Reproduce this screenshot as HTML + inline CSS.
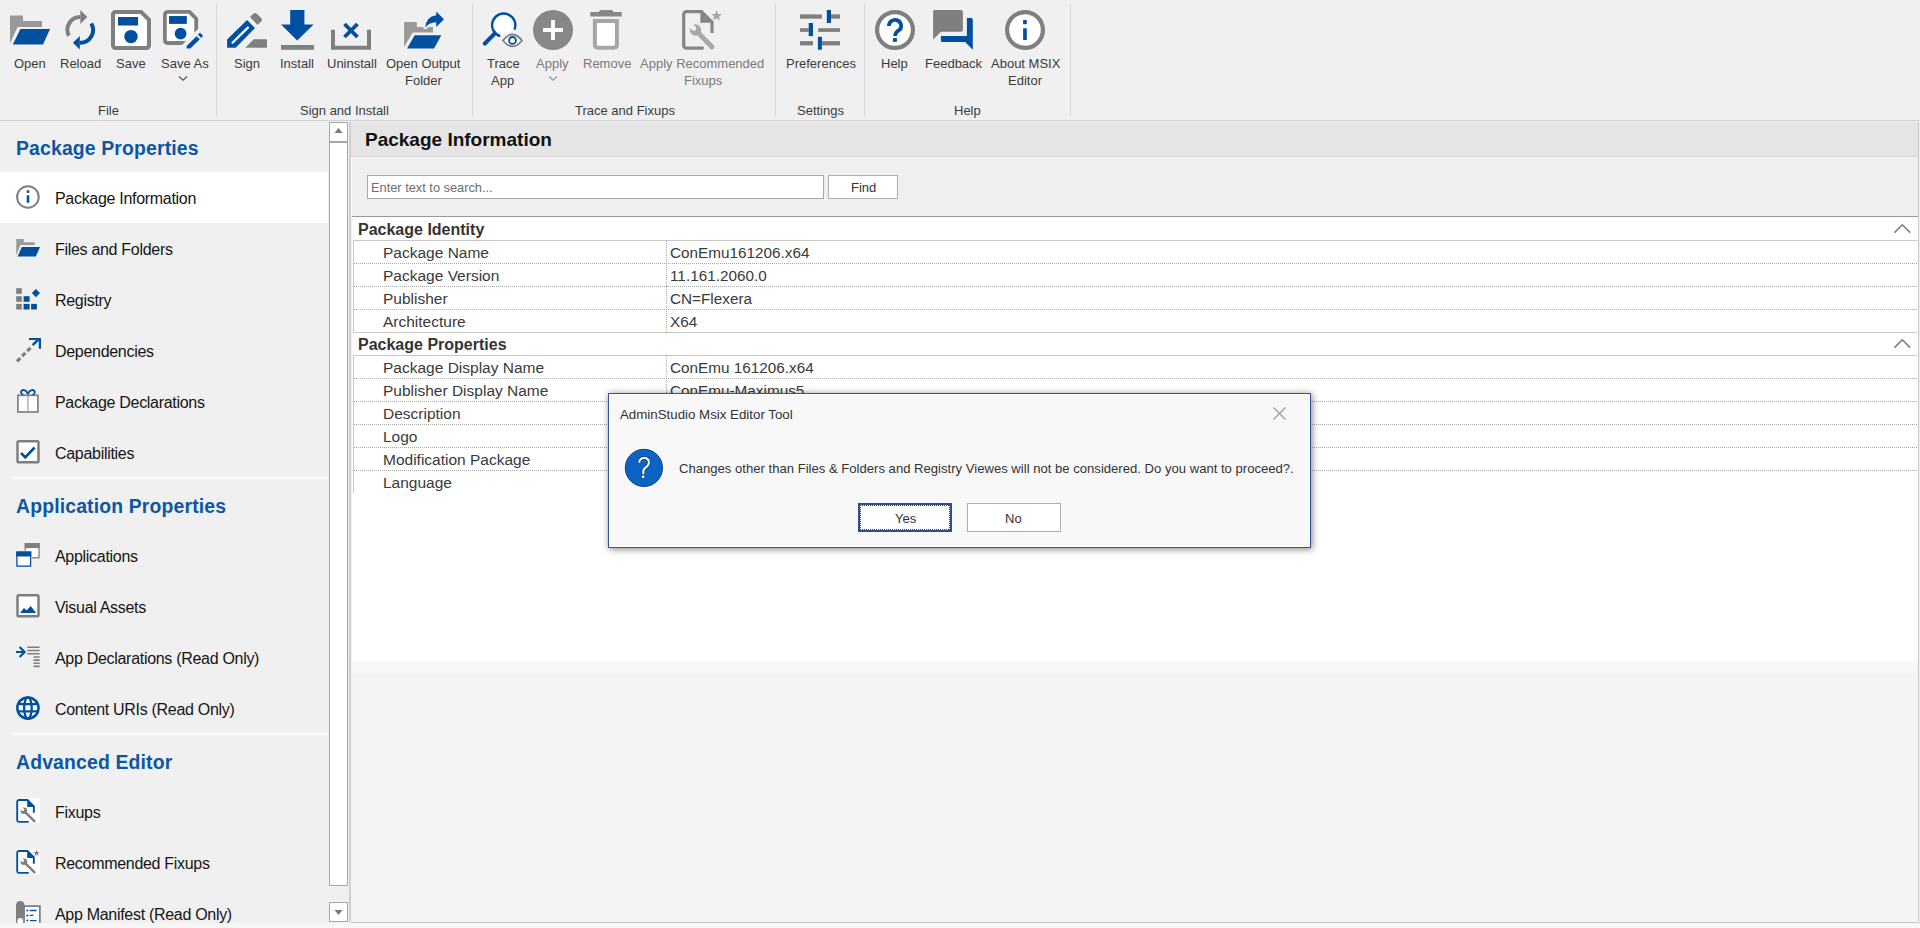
<!DOCTYPE html>
<html><head><meta charset="utf-8">
<style>
*{margin:0;padding:0;box-sizing:border-box}
html,body{width:1920px;height:928px;overflow:hidden;background:#f0f0f0;font-family:"Liberation Sans",sans-serif;position:relative}
.a{position:absolute}
.t{position:absolute;white-space:nowrap;line-height:1}
svg{position:absolute;overflow:visible}
.rl{font-size:13px;color:#3b3b3b;text-align:center}
.dis{color:#7a7a7a}
.gl{font-size:13px;color:#3b3b3b}
.sep{position:absolute;top:4px;width:1px;height:112px;background:#d6d6d6}
.si{font-size:16px;letter-spacing:-0.3px;color:#151515}
.sh{font-size:19.4px;font-weight:bold;letter-spacing:0.15px;color:#0b57a3}
.pl{font-size:15.5px;color:#3a3a3a}
.pv{font-size:15.3px;color:#3a3a3a}
.cat{font-size:16px;font-weight:bold;color:#333}
.dot{position:absolute;height:1px;background-image:linear-gradient(to right,#a8a8a8 50%,transparent 50%);background-size:2px 1px}
.vdot{position:absolute;width:1px;background-image:linear-gradient(to bottom,#a8a8a8 50%,transparent 50%);background-size:1px 2px}
</style></head><body>

<!-- RIBBON -->
<div class="a" style="left:0;top:0;width:1920px;height:120px;background:#f0f0f0"></div>
<div class="a" style="left:0;top:120px;width:1920px;height:1px;background:#d2d2d2"></div>
<div class="sep" style="left:216px"></div>
<div class="sep" style="left:472px"></div>
<div class="sep" style="left:775px"></div>
<div class="sep" style="left:864px"></div>
<div class="sep" style="left:1070px"></div>

<!-- ribbon labels -->
<div class="t rl" style="left:14px;top:57px">Open</div>
<div class="t rl" style="left:60px;top:57px">Reload</div>
<div class="t rl" style="left:116px;top:57px">Save</div>
<div class="t rl" style="left:161px;top:57px">Save As</div>
<div class="t gl" style="left:98px;top:104px">File</div>

<div class="t rl" style="left:234px;top:57px">Sign</div>
<div class="t rl" style="left:280px;top:57px">Install</div>
<div class="t rl" style="left:327px;top:57px">Uninstall</div>
<div class="t rl" style="left:386px;top:57px">Open Output</div>
<div class="t rl" style="left:405px;top:74px">Folder</div>
<div class="t gl" style="left:300px;top:104px">Sign and Install</div>

<div class="t rl" style="left:487px;top:57px">Trace</div>
<div class="t rl" style="left:491px;top:74px">App</div>
<div class="t rl dis" style="left:536px;top:57px">Apply</div>
<div class="t rl dis" style="left:583px;top:57px">Remove</div>
<div class="t rl dis" style="left:640px;top:57px">Apply Recommended</div>
<div class="t rl dis" style="left:684px;top:74px">Fixups</div>
<div class="t gl" style="left:575px;top:104px">Trace and Fixups</div>

<div class="t rl" style="left:786px;top:57px">Preferences</div>
<div class="t gl" style="left:797px;top:104px">Settings</div>
<div class="t rl" style="left:881px;top:57px">Help</div>
<div class="t rl" style="left:925px;top:57px">Feedback</div>
<div class="t rl" style="left:991px;top:57px">About MSIX</div>
<div class="t rl" style="left:1008px;top:74px">Editor</div>
<div class="t gl" style="left:954px;top:104px">Help</div>


<!-- RIBBON ICONS -->
<svg style="left:10px;top:10px" width="40" height="40" viewBox="0 0 40 40">
<path d="M0 5.5H13V11H32V17H7.6L0 33.5Z" fill="#999"/>
<path d="M10.4 19H40L33 34.5H2.8Z" fill="#0050a0"/>
</svg>
<svg style="left:60px;top:10px" width="40" height="40" viewBox="0 0 40 40">
<path d="M8.9 25.8A12.75 12.75 0 0 1 20.5 7.1" fill="none" stroke="#7f7f7f" stroke-width="4"/>
<path d="M20.3 0.1L27.3 7.1L20.3 14.1Z" fill="#7f7f7f"/>
<path d="M31.3 13.5A12.75 12.75 0 0 1 19.9 32.7" fill="none" stroke="#0050a0" stroke-width="4"/>
<path d="M19.8 26L13 32.7L19.8 39.5Z" fill="#0050a0"/>
</svg>
<svg style="left:111px;top:10px" width="40" height="40" viewBox="0 0 40 40">
<path d="M2 5Q2 2 5 2H30.2L38 9.8V35Q38 38 35 38H5Q2 38 2 35Z" fill="#fff" stroke="#7f7f7f" stroke-width="4"/>
<rect x="7" y="7" width="20" height="8.5" fill="#0050a0"/>
<circle cx="20" cy="26.6" r="6.7" fill="#0050a0"/>
</svg>
<svg style="left:163px;top:10px" width="40" height="40" viewBox="0 0 40 40">
<path d="M33.2 30V8.7L26.5 1.9H5Q1.9 1.9 1.9 5V30Q1.9 33 5 33H30Z" fill="#fff" stroke="#7f7f7f" stroke-width="3.8"/>
<rect x="6.05" y="6.05" width="17.75" height="7.85" fill="#0050a0"/>
<circle cx="17.6" cy="23.6" r="5.9" fill="#0050a0"/>
<path d="M54 0L14 40H40V0Z" fill="#f0f0f0"/>
<path d="M23.6 36L23.8 38.6H27.3L36.8 29.2L33.5 26.25Z" fill="#0050a0"/>
<path d="M34.9 24.4L37 22.7L40 25.7L38.1 27.9Z" fill="#0050a0"/>
</svg>

<svg style="left:227px;top:10px" width="40" height="40" viewBox="0 0 40 40">
<path d="M0.1 37.8V29.5L20.05 10.1L28 17.9L8.7 37.8Z" fill="#0050a0"/>
<line x1="5.5" y1="32.7" x2="20.9" y2="17.6" stroke="#fff" stroke-width="2.2" stroke-linecap="round"/>
<path d="M23 7.1L26.6 3.6Q28.1 2.3 29.6 3.6L34.4 8.3Q35.7 9.8 34.4 11.3L30.6 14.9Z" fill="#7f7f7f"/>
<path d="M18.2 37.8L26.8 29.2H40V37.8Z" fill="#7f7f7f"/>
</svg>
<svg style="left:277px;top:10px" width="40" height="40" viewBox="0 0 40 40">
<path d="M13.2 0H27.4V14.4H36.6L20.2 30.4L4 14.4H13.2Z" fill="#0050a0"/>
<rect x="4" y="35" width="32.9" height="4.8" fill="#7f7f7f"/>
</svg>
<svg style="left:331px;top:10px" width="40" height="40" viewBox="0 0 40 40">
<path d="M2 19.8V37.8H38V19.8" fill="none" stroke="#7f7f7f" stroke-width="4"/>
<path d="M13.5 14L26.5 27M26.5 14L13.5 27" stroke="#0050a0" stroke-width="3.8"/>
</svg>
<svg style="left:404px;top:10px" width="40" height="40" viewBox="0 0 40 40">
<path d="M0.1 12H12.8V17.1H18.7Q21.3 21.5 24.2 17.1H29V22.5H8.7L0.1 37Z" fill="#999"/>
<path d="M10.6 25.2H37.3L30 38.4H3.1Z" fill="#0050a0"/>
<path d="M21.2 17.8Q22 6.5 32.2 5.2V1.5L40 9.3L32.2 17.1V12.2Q24.5 12.3 21.2 17.8Z" fill="#0050a0"/>
</svg>

<svg style="left:483px;top:10px" width="40" height="40" viewBox="0 0 40 40">
<path d="M17.3 26.2A11.6 11.6 0 1 1 31.4 19.6" fill="#fff" stroke="#0050a0" stroke-width="2.4"/>
<line x1="1.8" y1="33.6" x2="11.6" y2="23.6" stroke="#0050a0" stroke-width="4.2" stroke-linecap="round"/>
<path d="M19.9 30.5Q29.5 18.5 39 30.5Q29.5 42.3 19.9 30.5Z" fill="#fff" stroke="#f0f0f0" stroke-width="5"/>
<path d="M19.9 30.5Q29.5 18.5 39 30.5Q29.5 42.3 19.9 30.5Z" fill="#fff" stroke="#7f7f7f" stroke-width="1.8"/>
<circle cx="29.5" cy="30.4" r="3.4" fill="#fff" stroke="#0050a0" stroke-width="1.8"/>
</svg>
<svg style="left:533px;top:10px" width="40" height="40" viewBox="0 0 40 40">
<circle cx="20" cy="20" r="20" fill="#878787"/>
<path d="M20 10V30M10 20H30" stroke="#fff" stroke-width="3.8"/>
</svg>
<svg style="left:590px;top:10px" width="40" height="40" viewBox="0 0 40 40">
<path d="M0.24 2H8.6L10.5 0.1H21.8L23.9 2H31.76V6.6H0.24Z" fill="#888"/>
<path d="M4.9 11V34.5Q4.9 37.7 8.1 37.7H23.7Q26.9 37.7 26.9 34.5V11Z" fill="#fff" stroke="#a6a6a6" stroke-width="4"/>
</svg>
<svg style="left:682px;top:10px" width="40" height="40" viewBox="0 0 40 40">
<path d="M21.7 38.2H4.7Q1.7 38.2 1.7 35.2V4.7Q1.7 1.7 4.7 1.7H19.5L30 12.2V23" fill="#f0f0f0" stroke="#868686" stroke-width="3.2"/>
<path d="M18.4 0.1V12.8H31.6Z" fill="#868686"/>
<circle cx="13.45" cy="20" r="5.7" fill="#a8a8a8"/>
<line x1="13.5" y1="20" x2="30" y2="37" stroke="#a8a8a8" stroke-width="4.8" stroke-linecap="round"/>
<circle cx="11.8" cy="18.4" r="2.4" fill="#f0f0f0"/>
<path d="M13.5 16.7L10.1 20.1L4.4 14.4L7.8 11Z" fill="#f0f0f0"/>
<path d="M34.6 0.3L36.1 3.9L39.9 4.1L37 6.6L38 10.3L34.6 8.2L31.2 10.3L32.2 6.6L29.3 4.1L33.1 3.9Z" fill="#a8a8a8"/>
</svg>

<svg style="left:800px;top:10px" width="40" height="40" viewBox="0 0 40 40" fill="#7f7f7f">
<rect x="0" y="4.4" width="21.9" height="4.3"/><rect x="31" y="4.4" width="9" height="4.3"/>
<rect x="0" y="18.2" width="8.7" height="3.7"/><rect x="18.2" y="18.2" width="21.8" height="3.7"/>
<rect x="0" y="31.1" width="13" height="4.3"/><rect x="21.9" y="31.1" width="18.1" height="4.3"/>
<rect x="26.8" y="0" width="4.2" height="13" fill="#0050a0"/>
<rect x="8.7" y="13" width="4.3" height="13.1" fill="#0050a0"/>
<rect x="17.9" y="26.8" width="4" height="12.9" fill="#0050a0"/>
</svg>
<svg style="left:875px;top:10px" width="40" height="40" viewBox="0 0 40 40">
<circle cx="20" cy="20" r="17.9" fill="#fff" stroke="#7f7f7f" stroke-width="4.2"/>
<path d="M13.95 16A6.1 6.1 0 1 1 25.1 19.4Q20.1 22.4 20.1 26" fill="none" stroke="#0050a0" stroke-width="3.8"/>
<rect x="17.9" y="28.1" width="4" height="3.8" fill="#0050a0"/>
</svg>
<svg style="left:933px;top:10px" width="40" height="40" viewBox="0 0 40 40">
<path d="M1.6 0.1H28.3Q29.9 0.1 29.9 1.7V20.1Q29.9 21.7 28.3 21.7H7.9L0.1 29.5V1.7Q0.1 0.1 1.6 0.1Z" fill="#7f7f7f"/>
<path d="M33.9 7.9H38.2Q39.8 7.9 39.8 9.5V39.7L32.1 32.1H9.5Q7.9 32.1 7.9 30.5V26.1H33.9Z" fill="#0050a0"/>
</svg>
<svg style="left:1005px;top:10px" width="40" height="40" viewBox="0 0 40 40">
<circle cx="20" cy="20" r="17.9" fill="#fff" stroke="#7f7f7f" stroke-width="4.2"/>
<rect x="18.1" y="10" width="3.7" height="4.2" fill="#0050a0"/>
<rect x="18.1" y="18.3" width="3.7" height="11.7" fill="#0050a0"/>
</svg>
<!-- dropdown chevrons -->
<svg style="left:178px;top:75px" width="10" height="7" viewBox="0 0 10 7"><path d="M1 1.5L5 5.2L9 1.5" fill="none" stroke="#555" stroke-width="1.3"/></svg>
<svg style="left:548px;top:75px" width="10" height="7" viewBox="0 0 10 7"><path d="M1 1.5L5 5.2L9 1.5" fill="none" stroke="#999" stroke-width="1.3"/></svg>

<!-- SIDEBAR -->
<div class="a" style="left:0;top:172px;width:328px;height:51px;background:#fff"></div>
<div class="t sh" style="left:16px;top:139px">Package Properties</div>
<div class="t si" style="left:55px;top:191px">Package Information</div>
<div class="t si" style="left:55px;top:242px">Files and Folders</div>
<div class="t si" style="left:55px;top:293px">Registry</div>
<div class="t si" style="left:55px;top:344px">Dependencies</div>
<div class="t si" style="left:55px;top:395px">Package Declarations</div>
<div class="t si" style="left:55px;top:446px">Capabilities</div>
<div class="a" style="left:12px;top:477px;width:316px;height:2px;background:#fafafa"></div>
<div class="t sh" style="left:16px;top:497px">Application Properties</div>
<div class="t si" style="left:55px;top:549px">Applications</div>
<div class="t si" style="left:55px;top:600px">Visual Assets</div>
<div class="t si" style="left:55px;top:651px">App Declarations (Read Only)</div>
<div class="t si" style="left:55px;top:702px">Content URIs (Read Only)</div>
<div class="a" style="left:12px;top:733px;width:316px;height:2px;background:#fafafa"></div>
<div class="t sh" style="left:16px;top:753px">Advanced Editor</div>
<div class="t si" style="left:55px;top:805px">Fixups</div>
<div class="t si" style="left:55px;top:856px">Recommended Fixups</div>
<div class="t si" style="left:55px;top:907px">App Manifest (Read Only)</div>


<!-- SIDEBAR ICONS -->
<svg style="left:10px;top:177px" width="40" height="40" viewBox="0 0 40 40">
<circle cx="17.9" cy="20" r="10.8" fill="none" stroke="#7f7f7f" stroke-width="2"/>
<rect x="16.7" y="13.3" width="2.6" height="2.6" fill="#0050a0"/>
<rect x="16.7" y="18.4" width="2.6" height="7.3" fill="#0050a0"/>
</svg>
<svg style="left:10px;top:230px" width="40" height="40" viewBox="0 0 40 40">
<path d="M6.25 9H13.8V12.3H24.8V15H10.4L6.25 25.4Z" fill="#999"/>
<path d="M11.8 17H30L25.8 26.5H7.6Z" fill="#0050a0"/>
</svg>
<svg style="left:10px;top:280px" width="40" height="40" viewBox="0 0 40 40">
<rect x="6.2" y="8.2" width="5.6" height="5.6" fill="#7f7f7f"/>
<rect x="6.2" y="16.2" width="5.6" height="5.6" fill="#7f7f7f"/>
<rect x="6.2" y="23.9" width="5.6" height="5.6" fill="#7f7f7f"/>
<rect x="13.6" y="16.2" width="6" height="5.6" fill="#0050a0"/>
<rect x="13.6" y="23.9" width="6" height="5.6" fill="#0050a0"/>
<rect x="21.1" y="23.9" width="5.8" height="5.6" fill="#0050a0"/>
<path d="M25.9 9L30 13.1L25.9 17.2L21.8 13.1Z" fill="#0050a0"/>
</svg>
<svg style="left:10px;top:331px" width="40" height="40" viewBox="0 0 40 40">
<path d="M7 30.3L21.8 15.6" stroke="#7f7f7f" stroke-width="3.2" stroke-dasharray="4.6 2.6"/>
<path d="M22.6 14.2L29 7.9" stroke="#0050a0" stroke-width="2.4"/>
<path d="M19 8H29.9V17.7" fill="none" stroke="#0050a0" stroke-width="2.2"/>
</svg>
<svg style="left:10px;top:382px" width="40" height="40" viewBox="0 0 40 40">
<rect x="7.9" y="13.3" width="20" height="16.7" fill="#fff" stroke="#7f7f7f" stroke-width="1.7"/>
<line x1="17.9" y1="14" x2="17.9" y2="29.3" stroke="#a8a8a8" stroke-width="1.3"/>
<path d="M17.9 12.2C16.5 7 11 7 11 10.3C11 12 12.5 12.6 13.2 12.8M17.9 12.2C19.3 7 24.8 7 24.8 10.3C24.8 12 23.3 12.6 22.6 12.8" fill="none" stroke="#0050a0" stroke-width="1.8"/>
</svg>
<svg style="left:10px;top:433px" width="40" height="40" viewBox="0 0 40 40">
<rect x="7.5" y="8.35" width="21" height="21" rx="1.3" fill="#fff" stroke="#7f7f7f" stroke-width="2.5"/>
<path d="M11 20L15.3 24.3L24.6 14.5" fill="none" stroke="#0050a0" stroke-width="2.6"/>
</svg>

<svg style="left:10px;top:536px" width="40" height="40" viewBox="0 0 40 40">
<rect x="15.35" y="7.75" width="13.7" height="14" fill="#fff" stroke="#7f7f7f" stroke-width="1.3"/>
<rect x="14.7" y="7.1" width="15" height="5" fill="#7f7f7f"/>
<rect x="5.5" y="14.7" width="16.6" height="16.9" fill="#f0f0f0"/>
<rect x="6.9" y="16.15" width="13.7" height="14" fill="#fff" stroke="#0050a0" stroke-width="1.3"/>
<rect x="6.25" y="15.5" width="15" height="5" fill="#0050a0"/>
</svg>
<svg style="left:10px;top:587px" width="40" height="40" viewBox="0 0 40 40">
<rect x="7.5" y="8.35" width="21" height="21" rx="1.3" fill="#fff" stroke="#7f7f7f" stroke-width="2.5"/>
<path d="M10.1 25.9L14 20.9L16.6 23.5L20.7 19L26.1 25.9Z" fill="#0050a0"/>
</svg>
<svg style="left:10px;top:638px" width="40" height="40" viewBox="0 0 40 40">
<path d="M6 14H15M9.6 9L14.6 14L9.6 19" fill="none" stroke="#0050a0" stroke-width="2.2"/>
<path d="M17.2 9.3H29.7M17.2 12.5H29.7M17.2 15.7H29.7M23.5 19H29.7M23.5 22.1H29.7M23.5 25.2H29.7M23.5 28.4H29.7" stroke="#7f7f7f" stroke-width="1.6"/>
</svg>
<svg style="left:10px;top:689px" width="40" height="40" viewBox="0 0 40 40">
<circle cx="17.9" cy="19" r="10.6" fill="#fff" stroke="#0050a0" stroke-width="2.5"/>
<path d="M8 15.1H27.8M8 22.4H27.8" stroke="#0050a0" stroke-width="2.4"/>
<ellipse cx="17.9" cy="19" rx="3.8" ry="10.6" fill="none" stroke="#0050a0" stroke-width="2.3"/>
</svg>

<svg style="left:10px;top:792px" width="40" height="40" viewBox="0 0 40 40">
<rect x="6.25" y="6.6" width="23.8" height="24.2" fill="#fff"/>
<path d="M18.75 29.85H8.7Q7.2 29.85 7.2 28.35V9.6Q7.2 8.05 8.7 8.05H17.5L23.85 14.4V20.7" fill="none" stroke="#0050a0" stroke-width="1.9"/>
<path d="M17.2 7.1V14.9H24.8Z" fill="#0050a0"/>
<circle cx="13.9" cy="18.8" r="3.3" fill="#7f7f7f"/>
<line x1="13.9" y1="18.8" x2="24.3" y2="29.1" stroke="#7f7f7f" stroke-width="2.6" stroke-linecap="round"/>
<circle cx="12.9" cy="17.8" r="1.3" fill="#fff"/>
<path d="M13.82 16.88L11.98 18.72L8.44 15.18L10.28 13.34Z" fill="#fff"/>
</svg>
<svg style="left:10px;top:843px" width="40" height="40" viewBox="0 0 40 40">
<rect x="6.25" y="6.6" width="23.8" height="24.2" fill="#fff"/>
<path d="M18.75 29.85H8.7Q7.2 29.85 7.2 28.35V9.6Q7.2 8.05 8.7 8.05H17.5L23.85 14.4V20.7" fill="none" stroke="#0050a0" stroke-width="1.9"/>
<path d="M17.2 7.1V14.9H24.8Z" fill="#0050a0"/>
<circle cx="13.9" cy="18.8" r="3.3" fill="#7f7f7f"/>
<line x1="13.9" y1="18.8" x2="24.3" y2="29.1" stroke="#7f7f7f" stroke-width="2.6" stroke-linecap="round"/>
<circle cx="12.9" cy="17.8" r="1.3" fill="#fff"/>
<path d="M13.82 16.88L11.98 18.72L8.44 15.18L10.28 13.34Z" fill="#fff"/>
<path d="M26.5 6.6L27.4 8.9L29.8 9L27.9 10.5L28.6 12.9L26.5 11.5L24.4 12.9L25.1 10.5L23.2 9L25.6 8.9Z" fill="#7f7f7f"/>
</svg>
<svg style="left:10px;top:894px" width="40" height="29" viewBox="0 0 40 29">
<rect x="6.05" y="6.97" width="8.6" height="21.8" fill="#fff"/>
<path d="M13.9 28.8V12.1H29.85V28.8" fill="#fff" stroke="#7f7f7f" stroke-width="1.8"/>
<path d="M6 28.8V11.3Q6 7 10.3 7Q14.6 7 14.6 11.3V28.8Z" fill="#7f7f7f"/>
<circle cx="10.3" cy="26.9" r="2.9" fill="#fff"/>
<circle cx="17.4" cy="16.5" r="1" fill="#0050a0"/><circle cx="17.4" cy="21.4" r="1" fill="#0050a0"/><circle cx="17.4" cy="26.6" r="1" fill="#0050a0"/>
<path d="M20.3 16.5H26M20.3 21.4H22.8M20.3 26.6H26" stroke="#0050a0" stroke-width="1.4" stroke-linecap="round"/>
</svg>

<!-- scrollbar -->
<div class="a" style="left:329px;top:122px;width:19px;height:800px;background:#f0f0f0"></div>
<div class="a" style="left:329px;top:122px;width:19px;height:764px;background:#fff;border:1px solid #a6a6a6"></div>
<div class="a" style="left:329px;top:141px;width:19px;height:2px;background:#a6a6a6"></div>
<div class="a" style="left:329px;top:902px;width:19px;height:20px;background:#fff;border:1px solid #a6a6a6"></div>
<svg style="left:329px;top:122px" width="19" height="20"><path d="M5.5 11 L9.5 6 L13.5 11Z" fill="#7a7a7a"/></svg>
<svg style="left:329px;top:902px" width="19" height="20"><path d="M5.5 8 L9.5 13 L13.5 8Z" fill="#7a7a7a"/></svg>
<div class="a" style="left:349px;top:122px;width:2px;height:800px;background:#d0d0d0"></div>

<!-- CONTENT -->
<div class="a" style="left:351px;top:122px;width:1568px;height:800px;background:#f4f4f4"></div>
<div class="a" style="left:351px;top:661px;width:1567px;height:12px;background:#f7f7f7"></div>
<div class="a" style="left:351px;top:122px;width:1568px;height:34px;background:#e5e5e5"></div>
<div class="a" style="left:351px;top:156px;width:1568px;height:1px;background:#d3d3d3"></div>
<div class="a" style="left:351px;top:157px;width:1568px;height:59px;background:#efefef;border-top:1px solid #f8f8f8;border-left:1px solid #f8f8f8"></div>
<div class="t" style="left:365px;top:130px;font-size:19px;font-weight:bold;color:#111">Package Information</div>
<div class="a" style="left:367px;top:175px;width:457px;height:24px;background:#fff;border:1px solid #a9a9a9"></div>
<div class="t" style="left:371px;top:182px;font-size:12.8px;color:#6d6d6d">Enter text to search...</div>
<div class="a" style="left:828px;top:175px;width:70px;height:24px;background:#fff;border:1px solid #b0b0b0"></div>
<div class="t" style="left:851px;top:181px;font-size:13px;color:#333">Find</div>

<div class="a" style="left:352px;top:216px;width:1566px;height:445px;background:#fff"></div>
<div class="a" style="left:352px;top:216px;width:1566px;height:1px;background:#999"></div>
<div class="a" style="left:1918px;top:122px;width:1px;height:800px;background:#c8c8c8"></div>
<div class="a" style="left:351px;top:922px;width:1568px;height:1px;background:#c8c8c8"></div>
<div class="a" style="left:0;top:923px;width:1920px;height:5px;background:#f7f7f7"></div>

<!-- grid -->
<div class="t cat" style="left:358px;top:222px">Package Identity</div>
<div class="a" style="left:353px;top:240px;width:1564px;height:1px;background:#c8c8c8"></div>
<div class="a" style="left:353px;top:240px;width:1px;height:93px;background:#c8c8c8"></div>
<div class="vdot" style="left:666px;top:241px;height:92px"></div>
<div class="t pl" style="left:383px;top:245px">Package Name</div>
<div class="t pv" style="left:670px;top:245px">ConEmu161206.x64</div>
<div class="dot" style="left:354px;top:263px;width:1563px"></div>
<div class="t pl" style="left:383px;top:268px">Package Version</div>
<div class="t pv" style="left:670px;top:268px">11.161.2060.0</div>
<div class="dot" style="left:354px;top:286px;width:1563px"></div>
<div class="t pl" style="left:383px;top:291px">Publisher</div>
<div class="t pv" style="left:670px;top:291px">CN=Flexera</div>
<div class="dot" style="left:354px;top:309px;width:1563px"></div>
<div class="t pl" style="left:383px;top:314px">Architecture</div>
<div class="t pv" style="left:670px;top:314px">X64</div>
<div class="a" style="left:353px;top:332px;width:1564px;height:1px;background:#c8c8c8"></div>

<div class="t cat" style="left:358px;top:337px">Package Properties</div>
<div class="a" style="left:353px;top:355px;width:1564px;height:1px;background:#c8c8c8"></div>
<div class="a" style="left:353px;top:355px;width:1px;height:138px;background:#c8c8c8"></div>
<div class="vdot" style="left:666px;top:356px;height:137px"></div>
<div class="t pl" style="left:383px;top:360px">Package Display Name</div>
<div class="t pv" style="left:670px;top:360px">ConEmu 161206.x64</div>
<div class="dot" style="left:354px;top:378px;width:1563px"></div>
<div class="t pl" style="left:383px;top:383px">Publisher Display Name</div>
<div class="t pv" style="left:670px;top:383px">ConEmu-Maximus5</div>
<div class="dot" style="left:354px;top:401px;width:1563px"></div>
<div class="t pl" style="left:383px;top:406px">Description</div>
<div class="dot" style="left:354px;top:424px;width:1563px"></div>
<div class="t pl" style="left:383px;top:429px">Logo</div>
<div class="dot" style="left:354px;top:447px;width:1563px"></div>
<div class="t pl" style="left:383px;top:452px">Modification Package</div>
<div class="dot" style="left:354px;top:470px;width:1563px"></div>
<div class="t pl" style="left:383px;top:475px">Language</div>

<svg style="left:1890px;top:220px" width="24" height="16" viewBox="0 0 24 16"><path d="M4.5 12.6L12.3 4.8L20.1 12.6" fill="none" stroke="#7f7f7f" stroke-width="1.6"/></svg>
<svg style="left:1890px;top:335px" width="24" height="16" viewBox="0 0 24 16"><path d="M4.5 12.6L12.3 4.8L20.1 12.6" fill="none" stroke="#7f7f7f" stroke-width="1.6"/></svg>
<!-- DIALOG -->
<div class="a" style="left:608px;top:393px;width:703px;height:155px;background:#f8f8f8;border:1px solid #2f5597;box-shadow:inset 0 0 0 1px #fff,1px 1px 7px rgba(0,0,0,0.5)"></div>
<svg style="left:620px;top:444px" width="48" height="48" viewBox="0 0 48 48">
<circle cx="23.9" cy="23.9" r="18.6" fill="#0b64c3" stroke="#0a3d7c" stroke-width="1"/>
<path d="M19.2 18.6Q19.6 14 24.2 14Q28.9 14 28.9 18.5Q28.9 21.2 26 23.1Q23.3 24.9 23.3 27.6V30.2" stroke="#0a3d7c" stroke-width="3.4" fill="none"/>
<path d="M19.2 18.6Q19.6 14 24.2 14Q28.9 14 28.9 18.5Q28.9 21.2 26 23.1Q23.3 24.9 23.3 27.6V30.2" stroke="#fff" stroke-width="2" fill="none"/>
<rect x="21.6" y="31.1" width="3.2" height="3.2" fill="#fff" stroke="#0a3d7c" stroke-width="0.7"/>
</svg>
<div class="t" style="left:620px;top:408px;font-size:13.3px;color:#333">AdminStudio Msix Editor Tool</div>
<svg style="left:1273px;top:407px" width="13" height="13"><path d="M0.5 0.5 L12.5 12.5 M12.5 0.5 L0.5 12.5" stroke="#9a9a9a" stroke-width="1.2"/></svg>
<div class="t" style="left:679px;top:462px;font-size:13.1px;color:#333">Changes other than Files &amp; Folders and Registry Viewes will not be considered. Do you want to proceed?.</div>
<div class="a" style="left:858px;top:503px;width:94px;height:29px;background:#fff;border:2px solid #2b4f94"></div>
<div class="dot" style="left:860px;top:505px;width:90px;background-image:linear-gradient(to right,#444 50%,transparent 50%)"></div>
<div class="dot" style="left:860px;top:529px;width:90px;background-image:linear-gradient(to right,#444 50%,transparent 50%)"></div>
<div class="vdot" style="left:860px;top:505px;height:25px;background-image:linear-gradient(to bottom,#444 50%,transparent 50%)"></div>
<div class="vdot" style="left:949px;top:505px;height:25px;background-image:linear-gradient(to bottom,#444 50%,transparent 50%)"></div>
<div class="t" style="left:895px;top:512px;font-size:13px;color:#333">Yes</div>
<div class="a" style="left:967px;top:503px;width:94px;height:29px;background:#fff;border:1px solid #adadad"></div>
<div class="t" style="left:1005px;top:512px;font-size:13px;color:#333">No</div>

</body></html>
